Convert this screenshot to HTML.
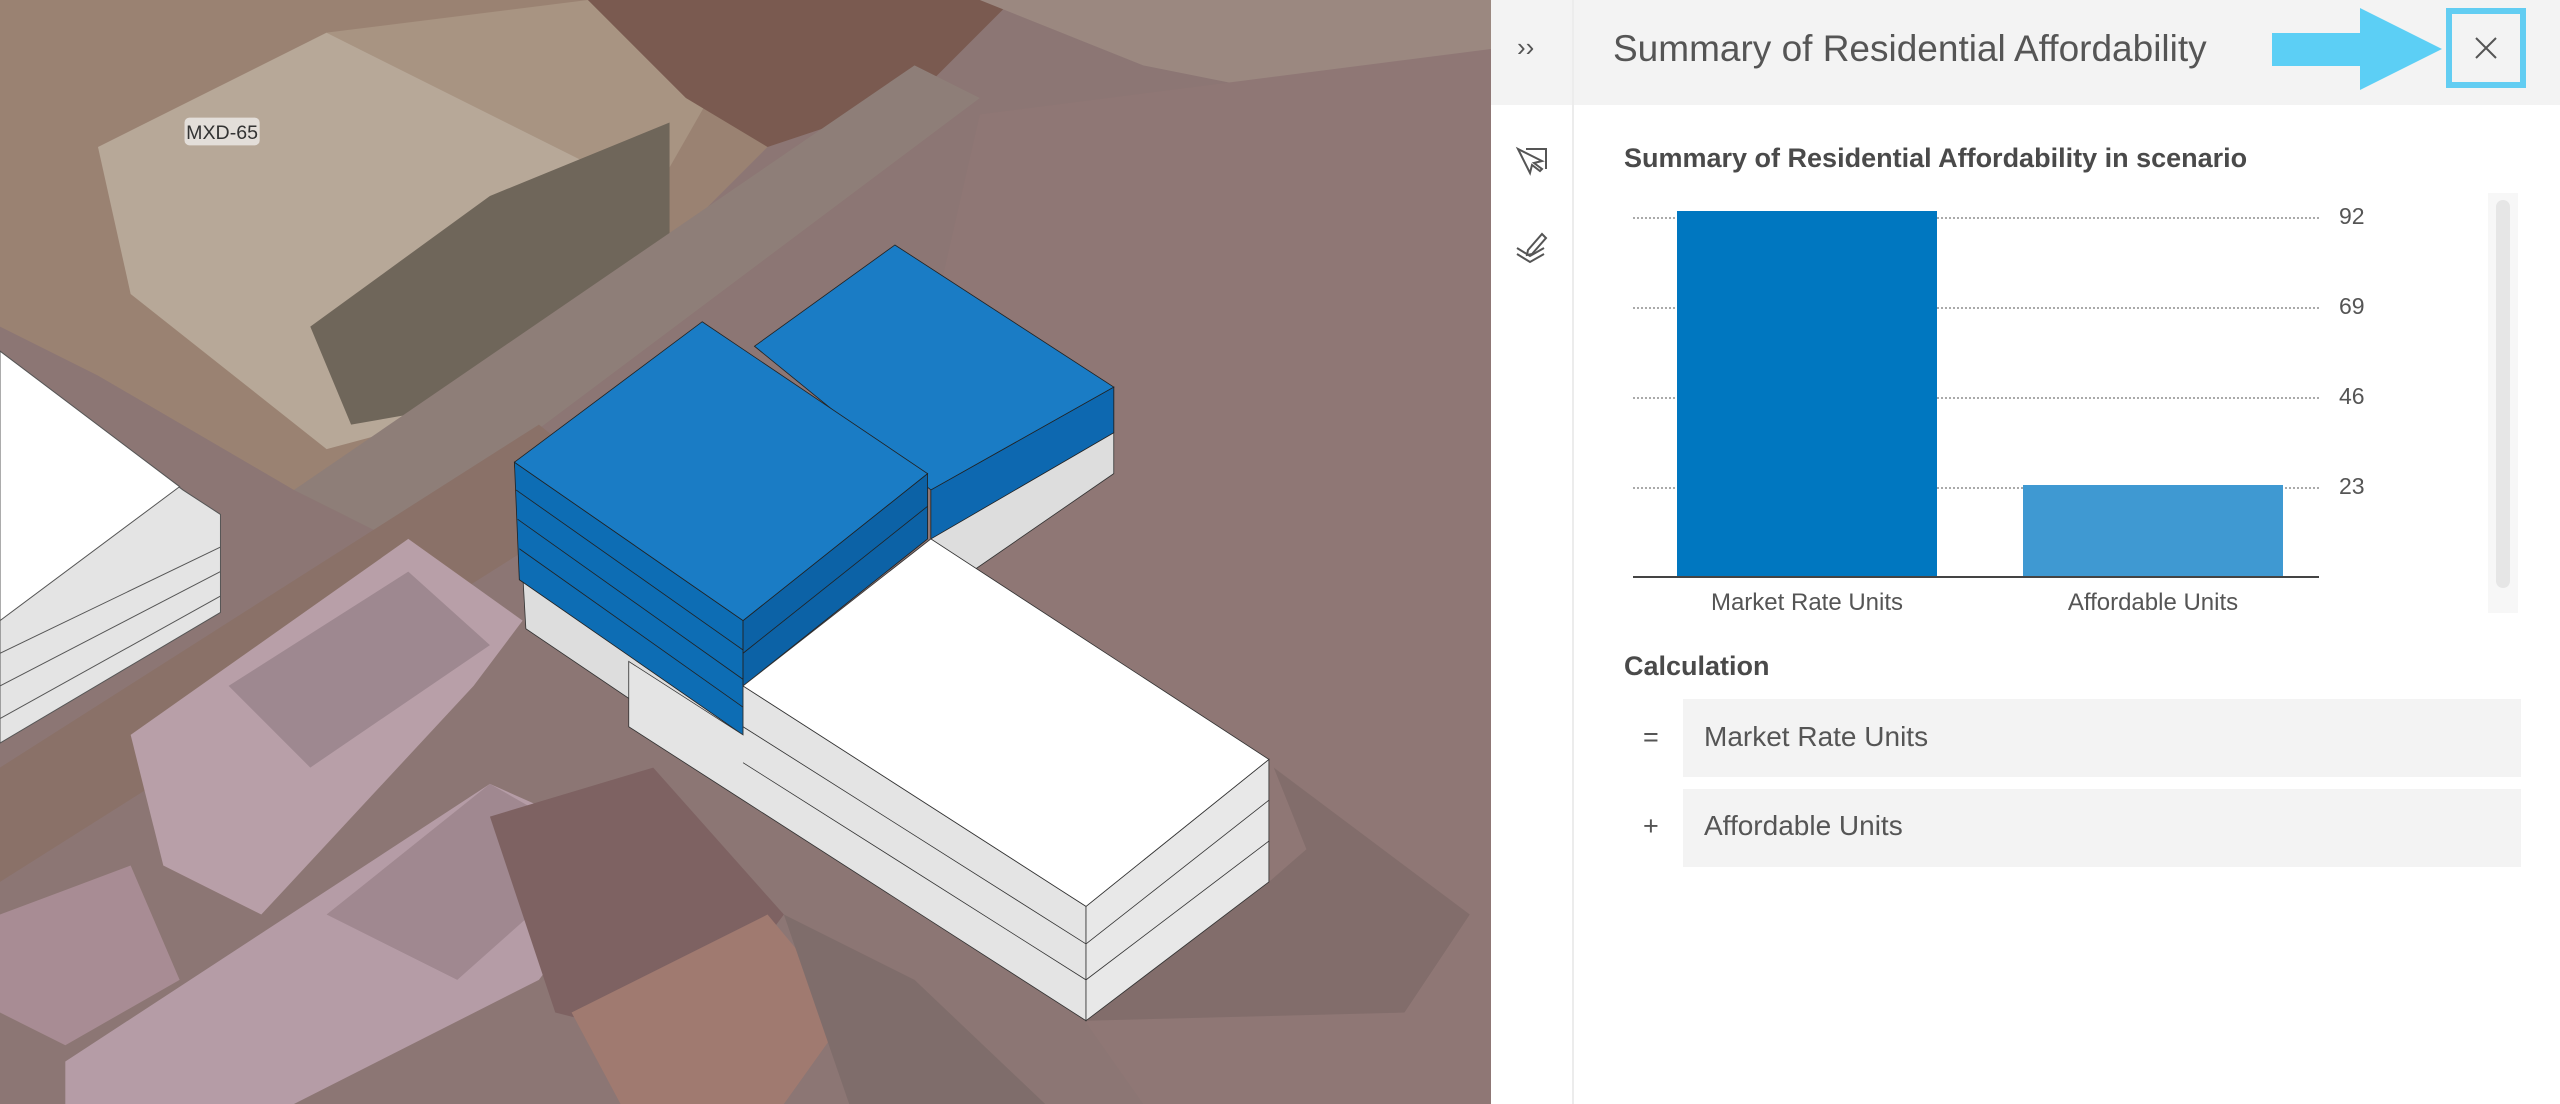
<!DOCTYPE html>
<html><head><meta charset="utf-8"><style>
*{margin:0;padding:0;box-sizing:border-box}
body{width:2560px;height:1104px;overflow:hidden;background:#fff;font-family:"Liberation Sans",sans-serif;position:relative}
.abs{position:absolute}
</style></head><body>
<svg class="abs" style="left:0;top:0" width="1491" height="1104" viewBox="0 0 913 676" preserveAspectRatio="none">
<rect width="913" height="676" fill="#8c7674"/>
<polygon points="0,0 560,0 400,160 300,250 180,300 60,230 0,200" fill="#9a8272"/>
<polygon points="60,90 200,20 400,120 330,240 200,275 80,180" fill="#b7a898"/>
<polygon points="200,20 360,0 440,50 400,120" fill="#a89482"/>
<polygon points="190,200 300,120 410,75 410,160 330,240 215,260" fill="#6f665a"/>
<polygon points="360,0 620,0 560,60 470,90 420,60" fill="#7a5a50"/>
<polygon points="600,0 913,0 913,30 800,60 700,40" fill="#9b8880"/>
<polygon points="180,300 560,40 600,60 240,330" fill="#8e7e78"/>
<polygon points="0,470 330,260 380,300 0,540" fill="#8a7168"/>
<polygon points="600,70 913,30 913,676 700,676 520,420" fill="#8f7775"/>
<polygon points="80,450 250,330 320,380 290,420 160,560 100,530" fill="#b89fa8"/>
<polygon points="140,420 250,350 300,395 190,470" fill="#9e8890"/>
<polygon points="40,650 300,480 390,520 330,600 180,676 40,676" fill="#b59ca6"/>
<polygon points="200,560 300,480 370,520 280,600" fill="#a08890"/>
<polygon points="300,500 400,470 480,560 420,640 340,620" fill="#7e6262"/>
<polygon points="350,620 470,560 520,620 480,676 380,676" fill="#a07a70"/>
<polygon points="0,560 80,530 110,600 40,640 0,620" fill="#a88c94"/>
<polygon points="480,560 560,600 640,676 520,676" fill="#7f6d6b"/>
<rect x="113" y="72" width="46" height="17" rx="3" fill="#e8e3e0" opacity=".9"/>
<text x="136" y="85" font-size="12" text-anchor="middle" fill="#333" font-family="Liberation Sans">MXD-65</text>
<polygon points="0,215 112,300 135,315 135,375 0,455" fill="#e4e4e4" stroke="#555" stroke-width=".6"/>
<polygon points="0,215 110,298 0,380" fill="#fff" stroke="#555" stroke-width=".6"/>
<polyline points="0,400 135,335" stroke="#555" stroke-width=".6" fill="none"/>
<polyline points="0,420 135,350" stroke="#555" stroke-width=".6" fill="none"/>
<polyline points="0,440 135,365" stroke="#555" stroke-width=".6" fill="none"/>
<polygon points="665,625 777,540 800,520 780,470 900,560 860,620" fill="#6f5e5c" opacity=".4"/>
<polygon points="570,300 682,237 682,290 595,350 570,335" fill="#ddd" stroke="#333" stroke-width=".5"/>
<polygon points="570,300 682,237 682,265 570,330" fill="#0d68b0" stroke="#222" stroke-width=".5"/>
<polygon points="462,212 548,150 682,237 570,300" fill="#1a7cc5" stroke="#222" stroke-width=".5"/>
<polygon points="315,283 455,380 455,475 322,385 320,350" fill="#ddd" stroke="#333" stroke-width=".5"/>
<polygon points="315,283 455,380 455,450 318,355" fill="#0d6db4" stroke="#222" stroke-width=".5"/>
<polyline points="316,300 455,398" stroke="#222" stroke-width=".5" fill="none"/>
<polyline points="317,318 455,416" stroke="#222" stroke-width=".5" fill="none"/>
<polyline points="318,336 455,433" stroke="#222" stroke-width=".5" fill="none"/>
<polygon points="455,380 568,290 568,330 455,420" fill="#0c62a6" stroke="#222" stroke-width=".5"/>
<polyline points="455,400 568,310" stroke="#222" stroke-width=".5" fill="none"/>
<polygon points="315,283 430,197 568,290 455,380" fill="#1a7cc5" stroke="#222" stroke-width=".5"/>
<polygon points="385,405 455,450 455,420 665,555 665,625 455,490 385,445" fill="#e4e4e4" stroke="#333" stroke-width=".5"/>
<polyline points="455,445 665,578" stroke="#333" stroke-width=".5" fill="none"/>
<polyline points="455,467 665,600" stroke="#333" stroke-width=".5" fill="none"/>
<polygon points="665,555 777,465 777,540 665,625" fill="#e8e8e8" stroke="#333" stroke-width=".5"/>
<polyline points="665,578 777,490" stroke="#333" stroke-width=".5" fill="none"/>
<polyline points="665,600 777,515" stroke="#333" stroke-width=".5" fill="none"/>
<polygon points="455,420 570,330 777,465 665,555" fill="#fff" stroke="#333" stroke-width=".5"/>
</svg>

<div class="abs" style="left:1491px;top:0;width:1069px;height:1104px;background:#fff"></div>
<div class="abs" style="left:1491px;top:0;width:1069px;height:105px;background:#f3f3f3"></div>
<div class="abs" style="left:1572px;top:0;width:2px;height:1104px;background:#ececec"></div>
<div class="abs" style="left:1517px;top:32px;font-size:26px;color:#555">&#8250;&#8250;</div>
<div class="abs" style="left:1613px;top:28px;font-size:37px;color:#555;white-space:nowrap">Summary of Residential Affordability</div>
<svg class="abs" style="left:1514px;top:145px" width="36" height="34" viewBox="0 0 36 34" fill="none" stroke="#555" stroke-width="2"><path d="M4 4 L16 28 L18 20 L26 26 L28 24 L20 18 L28 16 Z"/><path d="M12 4 H32 V24"/></svg>
<svg class="abs" style="left:1514px;top:228px" width="36" height="36" viewBox="0 0 36 36" fill="none" stroke="#555" stroke-width="2"><path d="M3 20 L16 28 L30 20"/><path d="M3 26 L16 34 L30 26"/><path d="M14 22 L28 6 L32 10 L18 26 L13 27 Z"/></svg>
<svg class="abs" style="left:2268px;top:6px" width="178" height="86" viewBox="0 0 178 86"><polygon points="4,27 92,27 92,2 174,43 92,84 92,60 4,60" fill="#5ccff5"/></svg>
<div class="abs" style="left:2446px;top:8px;width:80px;height:80px;border:6px solid #62cdf2;background:#f3f3f3"></div>
<svg class="abs" style="left:2474px;top:36px" width="24" height="24" viewBox="0 0 24 24" stroke="#555" stroke-width="2"><path d="M2 2L22 22M22 2L2 22"/></svg>
<div class="abs" style="left:1624px;top:143px;font-size:27px;font-weight:bold;color:#4a4a4a;white-space:nowrap">Summary of Residential Affordability in scenario</div>
<div class="abs" style="left:1633px;top:217px;width:686px;border-top:2px dotted #aaa"></div>
<div class="abs" style="left:1633px;top:307px;width:686px;border-top:2px dotted #aaa"></div>
<div class="abs" style="left:1633px;top:397px;width:686px;border-top:2px dotted #aaa"></div>
<div class="abs" style="left:1633px;top:487px;width:686px;border-top:2px dotted #aaa"></div>
<div class="abs" style="left:2339px;top:203px;font-size:23px;color:#555">92</div>
<div class="abs" style="left:2339px;top:293px;font-size:23px;color:#555">69</div>
<div class="abs" style="left:2339px;top:383px;font-size:23px;color:#555">46</div>
<div class="abs" style="left:2339px;top:473px;font-size:23px;color:#555">23</div>
<div class="abs" style="left:1677px;top:211px;width:260px;height:366px;background:#0077c0"></div>
<div class="abs" style="left:2023px;top:485px;width:260px;height:92px;background:#3f99d2"></div>
<div class="abs" style="left:1633px;top:576px;width:686px;height:2px;background:#444"></div>
<div class="abs" style="left:1657px;top:589px;width:300px;text-align:center;font-size:24px;color:#555">Market Rate Units</div>
<div class="abs" style="left:2003px;top:589px;width:300px;text-align:center;font-size:24px;color:#555">Affordable Units</div>
<div class="abs" style="left:2488px;top:193px;width:30px;height:420px;background:#f7f7f7"></div>
<div class="abs" style="left:2496px;top:200px;width:14px;height:388px;border-radius:7px;background:#e6e6e6"></div>
<div class="abs" style="left:1624px;top:651px;font-size:27px;font-weight:bold;color:#4a4a4a">Calculation</div>
<div class="abs" style="left:1683px;top:699px;width:838px;height:78px;background:#f3f3f3"></div>
<div class="abs" style="left:1683px;top:789px;width:838px;height:78px;background:#f3f3f3"></div>
<div class="abs" style="left:1643px;top:722px;font-size:27px;color:#555">=</div>
<div class="abs" style="left:1643px;top:811px;font-size:27px;color:#555">+</div>
<div class="abs" style="left:1704px;top:721px;font-size:28px;color:#555">Market Rate Units</div>
<div class="abs" style="left:1704px;top:810px;font-size:28px;color:#555">Affordable Units</div>
</body></html>
